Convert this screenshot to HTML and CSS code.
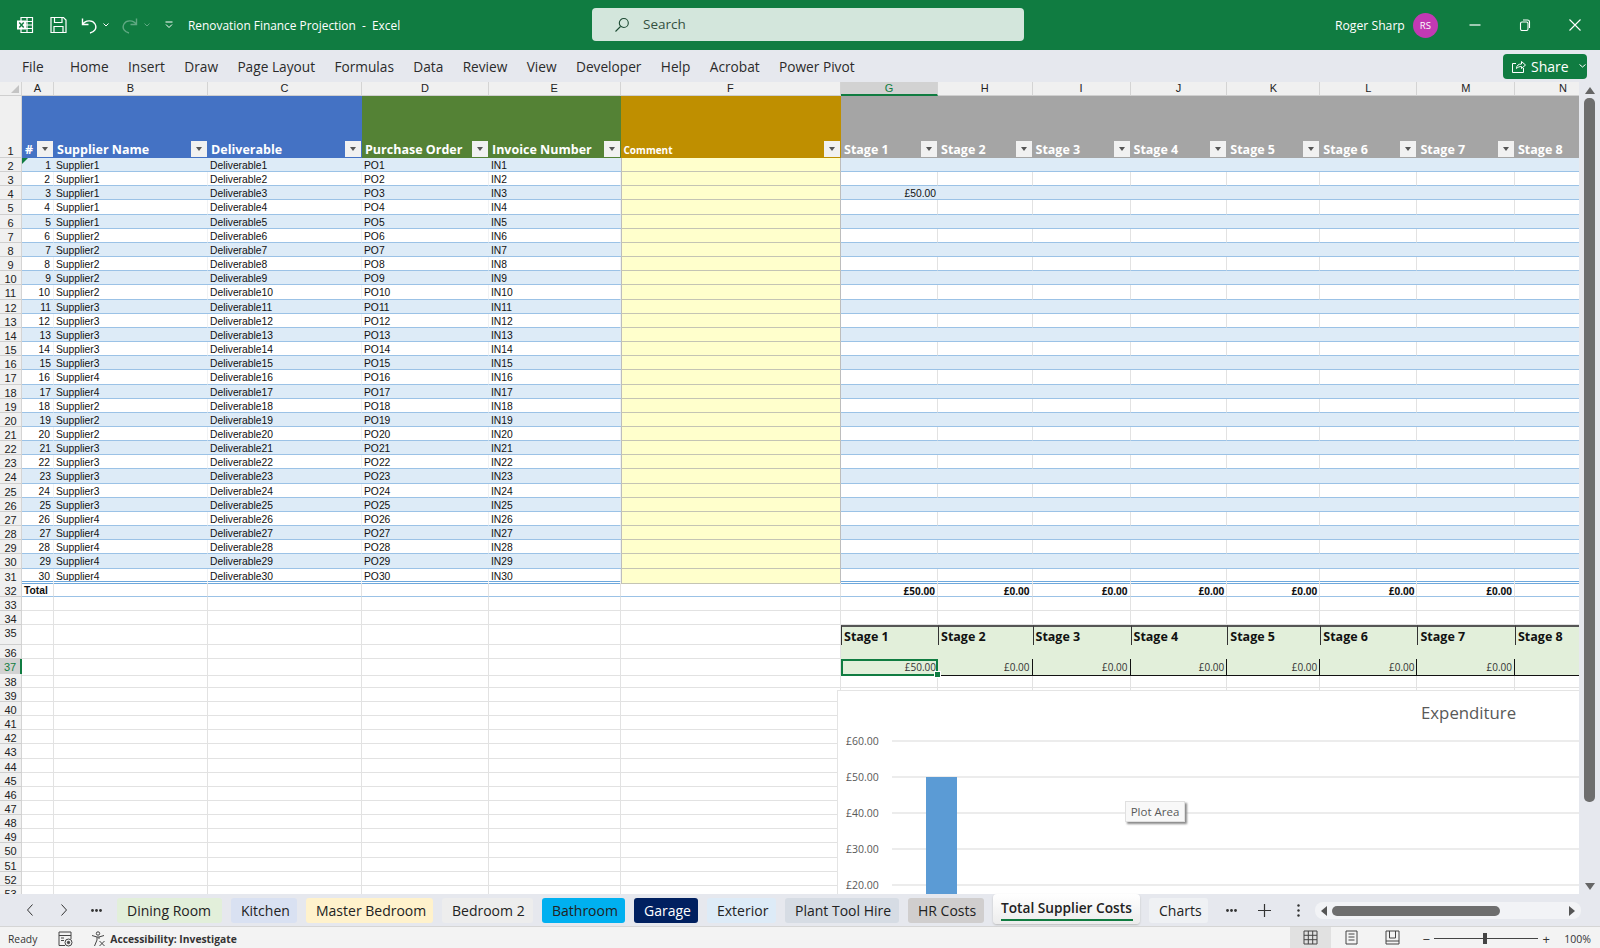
FILE: index.html
```html
<!DOCTYPE html>
<html lang="en">
<head>
  <meta charset="UTF-8" />
  <title>Renovation Finance Projection - Excel</title>
  <link rel="stylesheet" href="styles.css">
</head>
<body>
  <header class="titlebar">
    <div class="qat">
      <svg class="logo" width="18" height="18" viewBox="0 0 18 18" fill="none" stroke="#fff" stroke-width="1.2"><path d="M5 1.5h11.5v15H5zM5 5.5h11.5M5 9h11.5M5 12.5h11.5M11 1.5v15"/><rect x="1" y="4.5" width="9" height="9" fill="#fff" stroke="none"/><path d="M3.3 6.5l4.4 5M7.7 6.5l-4.4 5" stroke="#107c41" stroke-width="1.4"/></svg>
      <svg class="save" width="17" height="18" viewBox="0 0 17 18" fill="none" stroke="#fff" stroke-width="1.2"><path d="M1 1.5h12.5l2.5 2.5v12.5H1zM4.5 1.5v5h7.5v-5M4 16.5v-6h9v6"/></svg>
      <svg class="undo" width="16" height="17" viewBox="0 0 16 17" fill="none" stroke="#fff" stroke-width="1.4"><path d="M1.5 1.5v6h6M1.5 7.5c3-4.5 10-5 12.500-.5s-1 8-5 9"/></svg>
      <svg class="chev" width="6" height="4" viewBox="0 0 6 4" fill="none" stroke="#fff"><path d="M.5.5L3 3 5.500.5"/></svg>
      <svg class="redo" width="16" height="17" viewBox="0 0 16 17" fill="none" stroke="#5fa882" stroke-width="1.4"><path d="M14.500 1.500v6h-6M14.500 7.500c-3-4.500-10-5-12.500-.5s1 8 5 9"/></svg>
      <svg class="chev dim" width="6" height="4" viewBox="0 0 6 4" fill="none" stroke="#5fa882"><path d="M.5.5L3 3 5.500.5"/></svg>
      <svg class="custom" width="8" height="8" viewBox="0 0 8 8" fill="none" stroke="#fff"><path d="M.5 1h7M1 3.500l3 3 3-3"/></svg>
      <span class="doc-title">Renovation Finance Projection&nbsp; - &nbsp;Excel</span>
    </div>
    <div class="search">
      <svg width="16" height="16" viewBox="0 0 16 16" fill="none" stroke="#1c4a33" stroke-width="1.1"><circle cx="9.800" cy="6" r="4.500"/><path d="M6.500 9.500L1.500 14.500"/></svg>
      <span>Search</span>
    </div>
    <div class="account">
      <span class="user">Roger Sharp</span>
      <span class="avatar">RS</span>
      <div class="winbtns">
        <svg width="12" height="12" viewBox="0 0 12 12" stroke="#fff" stroke-width="1.200"><path d="M.5 6h11"/></svg>
        <svg width="12" height="12" viewBox="0 0 12 12" fill="none" stroke="#fff" stroke-width="1.100"><rect x="1.500" y="3" width="7.500" height="8.500" rx="1.500"/><path d="M4 1h4.500A2 2 0 0 1 10.500 3v6"/></svg>
        <svg width="12" height="12" viewBox="0 0 12 12" stroke="#fff" stroke-width="1.100"><path d="M.5.500l11 11M11.500.500l-11 11"/></svg>
      </div>
    </div>
  </header>

  <nav class="ribbon">
    <span class="rtab file">File</span>
    <span class="rtab">Home</span>
    <span class="rtab">Insert</span>
    <span class="rtab">Draw</span>
    <span class="rtab">Page Layout</span>
    <span class="rtab">Formulas</span>
    <span class="rtab">Data</span>
    <span class="rtab">Review</span>
    <span class="rtab">View</span>
    <span class="rtab">Developer</span>
    <span class="rtab">Help</span>
    <span class="rtab">Acrobat</span>
    <span class="rtab">Power Pivot</span>
    <button class="share">
      <svg width="16" height="15" viewBox="0 0 16 15" fill="none" stroke="#fff"><path d="M5 4.500H1.500v9h11V9M5.500 9.500c0-3 2-4.500 5-4.500V2.500l4 3.500-4 3.500V7.500c-2 0-3.500.5-5 2z"/></svg>
      <span>Share</span>
      <svg class="share-chev" width="7" height="4" viewBox="0 0 7 4" fill="none" stroke="#fff"><path d="M.5.500l3 2.500 3-2.500"/></svg>
    </button>
  </nav>

  <main class="workspace">
    <div class="sheet" id="sheet">
      <div class="chart">
        <svg width="741" height="204" viewBox="0 0 741 204">
          <text class="chart-title" x="583" y="28">Expenditure</text>
          <g class="gridlines">
            <line x1="54" y1="50" x2="741" y2="50"/>
            <line x1="54" y1="86" x2="741" y2="86"/>
            <line x1="54" y1="122" x2="741" y2="122"/>
            <line x1="54" y1="158" x2="741" y2="158"/>
            <line x1="54" y1="194" x2="741" y2="194"/>
          </g>
          <g class="axis">
            <text x="8" y="54">£60.00</text>
            <text x="8" y="90">£50.00</text>
            <text x="8" y="126">£40.00</text>
            <text x="8" y="162">£30.00</text>
            <text x="8" y="198">£20.00</text>
          </g>
          <rect x="88" y="86" width="31" height="118" fill="#5b9bd5"/>
        </svg>
        <div class="tip">Plot Area</div>
      </div>
    </div>
    <aside class="vscroll">
      <svg width="10" height="7" viewBox="0 0 10 7" fill="#666"><path d="M5 0l5 7H0z"/></svg>
      <div class="vtrack"><div class="vthumb"></div></div>
      <svg width="10" height="7" viewBox="0 0 10 7" fill="#666"><path d="M5 7L0 0h10z"/></svg>
    </aside>
  </main>

  <section class="tabbar">
    <div class="tabnav">
      <svg width="8" height="12" viewBox="0 0 8 12" fill="none" stroke="#333"><path d="M6.500.500L1.500 6l5 5.500"/></svg>
      <svg width="8" height="12" viewBox="0 0 8 12" fill="none" stroke="#333"><path d="M1.500.500l5 5.500-5 5.500"/></svg>
      <svg class="dots" width="11" height="3" viewBox="0 0 11 3" fill="#333"><circle cx="1.500" cy="1.500" r="1.400"/><circle cx="5.500" cy="1.500" r="1.400"/><circle cx="9.500" cy="1.500" r="1.400"/></svg>
    </div>
    <div class="tabs">
      <span class="tab t-dining">Dining Room</span>
      <span class="tab t-kitchen">Kitchen</span>
      <span class="tab t-master">Master Bedroom</span>
      <span class="tab t-bed2">Bedroom 2</span>
      <span class="tab t-bath">Bathroom</span>
      <span class="tab t-garage">Garage</span>
      <span class="tab t-ext">Exterior</span>
      <span class="tab t-plant">Plant Tool Hire</span>
      <span class="tab t-hr">HR Costs</span>
      <span class="tab t-total">Total Supplier Costs</span>
      <span class="tab t-charts">Charts</span>
    </div>
    <svg class="more" width="11" height="3" viewBox="0 0 11 3" fill="#333"><circle cx="1.500" cy="1.500" r="1.400"/><circle cx="5.500" cy="1.500" r="1.400"/><circle cx="9.500" cy="1.500" r="1.400"/></svg>
    <svg class="plus" width="13" height="13" viewBox="0 0 13 13" stroke="#333" stroke-width="1.200"><path d="M6.500 0v13M0 6.500h13"/></svg>
    <svg class="kebab" width="3" height="13" viewBox="0 0 3 13" fill="#333"><circle cx="1.500" cy="1.500" r="1.200"/><circle cx="1.500" cy="6.500" r="1.200"/><circle cx="1.500" cy="11.500" r="1.200"/></svg>
    <div class="hscroll">
      <svg width="6" height="10" viewBox="0 0 6 10" fill="#555"><path d="M0 5l6-5v10z"/></svg>
      <div class="hthumb"></div>
      <svg class="hright" width="6" height="10" viewBox="0 0 6 10" fill="#555"><path d="M6 5L0 0v10z"/></svg>
    </div>
  </section>

  <footer class="statusbar">
    <span class="ready">Ready</span>
    <svg class="macro" width="15" height="16" viewBox="0 0 15 16" fill="none" stroke="#444"><path d="M7 14.500H1V1h12v7M1 4.500h12M3 7h3M3 9.500h3"/><circle cx="10.500" cy="11.500" r="3.500"/><circle cx="10.500" cy="11.500" r="1.200" fill="#444"/></svg>
    <svg class="access" width="16" height="16" viewBox="0 0 16 16" fill="none" stroke="#444"><circle cx="7" cy="2.500" r="1.700"/><path d="M1 4.500l5 1.500h2l5-1.500M6 6v3l-2.500 6M8 6v2M8.500 10l5 5M13.500 10l-5 5"/></svg>
    <span class="a11y">Accessibility: Investigate</span>
    <div class="views">
      <span class="view on"><svg width="15" height="15" viewBox="0 0 15 15" fill="none" stroke="#444"><path d="M1 1h13v13H1zM1 5.300h13M1 9.700h13M5.300 1v13M9.700 1v13"/></svg></span>
      <span class="view"><svg width="13" height="15" viewBox="0 0 13 15" fill="none" stroke="#444"><path d="M1 1h11v13H1zM3.500 4h6M3.500 7h6M3.500 10h6"/></svg></span>
      <span class="view"><svg width="15" height="15" viewBox="0 0 15 15" fill="none" stroke="#444"><path d="M1 1h13v13H1zM4.500 1v7h6V1M1 11h13"/></svg></span>
    </div>
    <div class="zoom">
      <span class="zsign">−</span>
      <div class="zline"><div class="zthumb"></div></div>
      <span class="zsign">+</span>
      <span class="zpct">100%</span>
    </div>
  </footer>

  <script src="script.js"></script>
</body>
</html>
```

FILE: styles.css
```css
:root {
  --green: #107c41;
  --chrome: #e6e8ee;
  --ui: "Open Sans", "Noto Sans", sans-serif;
  --cell: "Liberation Sans", Arial, sans-serif;
  --cols: 22px 32px 154px 154px 127px 131.500px 220.500px 97px 94.500px 98px 96.800px 93px 97.200px 97.500px 97px;
}

* {
  box-sizing: border-box;
}

body {
  margin: 0;
  height: 948px;
  overflow: hidden;
  display: flex;
  flex-direction: column;
  background: var(--chrome);
  font-family: var(--ui);
  color: #222;
}

/* title bar */
.titlebar {
  height: 50px;
  flex: none;
  background: var(--green);
  color: #fff;
  display: grid;
  grid-template-columns: 592px 432px 1fr;
  align-items: center;
}

.qat {
  display: flex;
  align-items: center;
  padding-left: 16px;
}

.save { margin-left: 16px; }
.undo { margin-left: 14px; }
.chev { margin-left: 6px; }
.redo { margin-left: 13px; }
.custom { margin-left: 15px; }

.doc-title {
  margin-left: 15px;
  font-size: 11.900px;
  white-space: nowrap;
}

.search {
  height: 33px;
  margin-top: -1px;
  background: #d3e6dc;
  border-radius: 4px;
  display: flex;
  align-items: center;
  gap: 13px;
  padding-left: 22px;
  font-size: 13.500px;
  line-height: 17px;
  color: #33503f;
}

.account {
  display: flex;
  align-items: center;
  padding-left: 311px;
  white-space: nowrap;
}

.user {
  font-size: 12.200px;
}

.avatar {
  width: 25px;
  height: 25px;
  margin-left: 8px;
  border-radius: 50%;
  background: #c239b3;
  font-size: 9.500px;
  display: flex;
  align-items: center;
  justify-content: center;
}

.winbtns {
  display: flex;
  gap: 38px;
  margin-left: 31px;
}

/* ribbon tabs */
.ribbon {
  height: 32px;
  flex: none;
  display: flex;
  align-items: center;
  gap: 19.350px;
  padding-left: 22px;
  position: relative;
  font-size: 13.700px;
  color: #2b2b2b;
}

.rtab.file { margin-right: 7px; }

.share {
  margin-left: auto;
  margin-right: 13px;
  width: 84px;
  height: 25px;
  border: none;
  border-radius: 4px;
  background: var(--green);
  color: #fff;
  font-family: var(--ui);
  font-size: 14px;
  display: flex;
  align-items: center;
  gap: 4px;
  padding: 0 0 0 8px;
}

.share-chev { margin-left: 6px; }

/* sheet */
.workspace {
  flex: none;
  height: 812px;
  display: flex;
}

.sheet {
  width: 1579px;
  position: relative;
  overflow: hidden;
  background: #fff;
  font-family: var(--cell);
  font-size: 10.300px;
  color: #111;
}

.row {
  display: grid;
  grid-template-columns: var(--cols);
  height: 14.170px;
}

.row > div {
  border-right: 1px solid #e2e2e2;
  border-bottom: 1px solid #e2e2e2;
  padding: 0 3px 0 2px;
  line-height: 16px;
  white-space: nowrap;
  overflow: hidden;
}

.row > .rh,
.colheads > div {
  background: #f0f0f0;
  border-right: 1px solid #d4d4d4;
  border-bottom: 1px solid #cfcfcf;
  padding: 0;
  text-align: center;
  font-size: 11px;
  color: #222;
}

.colheads > div {
  line-height: 13px;
}

.row > .rh.sel {
  background: #d2d2d2;
  color: #107c41;
  border-right: 2px solid var(--green);
}

.colheads > div.sel {
  background: #d2d2d2;
  color: #107c41;
  border-bottom: 2px solid var(--green);
}

.corner {
  position: relative;
}

.corner::after {
  content: "";
  position: absolute;
  right: 2px;
  bottom: 2px;
  border-style: solid;
  border-width: 0 0 8px 8px;
  border-color: transparent transparent #c4c4c4 transparent;
}

.colheads {
  height: 14px;
}

.num { text-align: right; }

/* table header row */
.row.head {
  height: 62px;
}

.row.head > div:not(.rh) {
  border: none;
  padding: 0 0 1px 3px;
  display: flex;
  align-items: flex-end;
  justify-content: space-between;
  color: #fff;
  font-family: var(--ui);
  font-weight: 700;
  font-size: 12.500px;
  line-height: 15px;
}

.row.head > .rh {
  display: flex;
  align-items: flex-end;
  justify-content: center;
  line-height: 11px;
}

.row.head > .h-blue { background: #4472c4; }
.row.head > .h-green { background: #548235; }
.row.head > .h-grey { background: #a5a5a5; }

.row.head > div.h-gold:not(.rh) {
  background: #bf8f00;
  font-size: 10px;
  line-height: 14px;
}

.filter {
  width: 16px;
  height: 16px;
  flex: none;
  margin-right: 1px;
  background: #f1f1f1;
  position: relative;
}

.filter::after {
  content: "";
  position: absolute;
  left: 5px;
  top: 6px;
  border-style: solid;
  border-width: 4px 3px 0 3px;
  border-color: #555 transparent transparent transparent;
}

/* table body */
.row.band > div:not(.rh) {
  background: #ddebf7;
  border-right: none;
  border-bottom: 1px solid #9bc2e6;
}

.row.plain > div:not(.rh) {
  border-bottom: 1px solid #9bc2e6;
}

.row.plain > div.data-a,
.row.plain > div.data-b {
  border-right-color: #f0f2f4;
}

.row.band > div.yellow,
.row.plain > div.yellow {
  background: #ffffcc;
  border-left: 1px solid #bdbdbd;
  border-right: 1px solid #bdbdbd;
  border-bottom: 1px solid #c4c4b4;
}

.row.last > div:not(.rh):not(.yellow) {
  border-bottom: 3px double #6ea8dc;
  height: 15px;
}

.row.first > .cell-a {
  position: relative;
}

.row.first > .cell-a::before {
  content: "";
  position: absolute;
  left: 0;
  top: 0;
  border-style: solid;
  border-width: 6px 6px 0 0;
  border-color: var(--green) transparent transparent transparent;
}

.row.total > div:not(.rh) {
  border-bottom: 1px solid #9bc2e6;
  font-weight: 700;
}

.row.total .money,
.row.plain .money,
.row.band .money,
.row.stage-values .money {
  font-family: var(--ui);
  text-align: right;
  padding: 0 2px 0 0;
  font-size: 10px;
}

.row.plain .money.arial,
.row.band .money.arial {
  font-family: var(--cell);
  font-size: 10.300px;
}

/* stage summary block */
.row.stage-head { height: 20.300px; }
.row.stage-mid { height: 14px; }

.row.stage-head > .st,
.row.stage-mid > .st,
.row.stage-values > .st {
  background: #e2efda;
  border-right: none;
  border-bottom: none;
}

.row.stage-head > .st {
  border-top: 2px solid #555;
  border-left: 1px solid #333;
  font-family: var(--ui);
  font-weight: 700;
  font-size: 12.500px;
  line-height: 20px;
  padding-left: 2px;
  color: #111;
}

.row.stage-values > .st {
  border-right: 1px solid #111;
  border-bottom: 1px solid #111;
  color: #333;
  position: relative;
  overflow: visible;
}

.row.stage-values > .st.no-edge {
  border-right: none;
}

.row.stage-values > .st.active {
  outline: 2px solid var(--green);
  outline-offset: -2px;
  padding-right: 2px;
  border-right: none;
}

.st.active::after {
  content: "";
  position: absolute;
  right: -3px;
  bottom: -3px;
  width: 5px;
  height: 5px;
  background: var(--green);
  border: 1px solid #fff;
  z-index: 1;
}

/* chart */
.chart {
  position: absolute;
  left: 837px;
  top: 608px;
  right: 0;
  bottom: 0;
  background: #fff;
  border-left: 1px solid #e4e4e4;
  border-top: 1px solid #e4e4e4;
  font-family: var(--ui);
}

.chart svg {
  display: block;
}

.chart-title {
  font-size: 16.800px;
  fill: #595959;
}

.gridlines line {
  stroke: #d9d9d9;
}

.axis text {
  font-size: 10.500px;
  fill: #595959;
}

.tip {
  position: absolute;
  left: 287px;
  top: 110px;
  width: 60px;
  height: 21px;
  background: #f8f8f8;
  border: 1px solid #e0e0e0;
  box-shadow: 2px 2px 2px #8a8a8a;
  font-size: 11.500px;
  line-height: 19px;
  text-align: center;
  color: #595959;
}

/* scrollbars */
.vscroll {
  width: 21px;
  display: flex;
  flex-direction: column;
  align-items: center;
  padding: 5px 3px 4px;
  gap: 4px;
}

.vscroll svg {
  flex: none;
}

.vtrack {
  flex: 1;
  width: 100%;
  padding: 0 2px;
}

.vthumb {
  height: 704px;
  background: #6e6e6e;
  border-radius: 5px;
}

/* sheet tabs */
.tabbar {
  height: 33px;
  flex: none;
  display: flex;
  align-items: center;
  border-bottom: 1px solid #d5d5d5;
  position: relative;
}

.tabnav {
  width: 117px;
  flex: none;
  display: flex;
  align-items: center;
  padding-left: 26px;
  gap: 26px;
}

.tabnav .dots {
  margin-left: -3px;
}

.tabs {
  display: flex;
  align-items: center;
  gap: 9px;
}

.tab {
  height: 25px;
  padding: 0 10px;
  border-radius: 3px;
  font-size: 14px;
  line-height: 25px;
  white-space: nowrap;
  display: block;
}

.t-dining { background: #e2efda; width: 105px; }
.t-kitchen { background: #d9e1f2; width: 66px; }
.t-master { background: #fff2cc; width: 127px; }
.t-bed2 { background: #ededed; width: 91px; }
.t-bath { background: #00b0f0; width: 83px; }
.t-garage { background: #002060; color: #fff; width: 64px; }
.t-ext { background: #ddebf7; width: 69px; }
.t-plant { background: #d6dce4; width: 114px; }
.t-hr { background: #d0cece; width: 76px; }

.t-total {
  width: 147px;
  height: 30px;
  margin-top: -3px;
  padding: 0 8px;
  background: linear-gradient(#ffffff, #ececec);
  border-radius: 4px;
  box-shadow: 0 1px 2px #bbb;
  font-weight: 600;
  font-size: 13.700px;
  line-height: 27px;
  position: relative;
}

.t-total::after {
  content: "";
  position: absolute;
  left: 8px;
  right: 7px;
  bottom: 3px;
  height: 2px;
  background: var(--green);
}

.t-charts { background: #eff1f4; width: 59px; }

.more {
  margin-left: 18px;
  flex: none;
}

.plus { margin-left: 21px; flex: none; }
.kebab { margin-left: 26px; flex: none; }

.hscroll {
  position: absolute;
  left: 1315px;
  top: 8px;
  width: 266px;
  height: 17px;
  background: #f2f3f6;
  border-radius: 8px;
  display: flex;
  align-items: center;
  padding: 0 6px;
}

.hthumb {
  width: 168px;
  height: 10px;
  margin-left: 5px;
  background: #6e6e6e;
  border-radius: 5px;
}

.hright { margin-left: auto; }

/* status bar */
.statusbar {
  flex: 1;
  background: #f3f3f3;
  display: flex;
  align-items: center;
  padding: 2px 0 0 8px;
  font-size: 10.300px;
  color: #333;
}

.macro { margin-left: 21px; }
.access { margin-left: 18px; }

.a11y {
  margin-left: 3px;
  font-weight: 700;
}

.views {
  margin-left: auto;
  margin-top: -2px;
  display: flex;
  align-self: stretch;
}

.view {
  width: 41px;
  display: flex;
  align-items: center;
  justify-content: center;
}

.view.on { background: #e1e1e1; }

.zoom {
  display: flex;
  align-items: center;
  margin-left: 8px;
  padding-right: 9px;
}

.zsign {
  font-size: 13px;
  width: 10px;
  text-align: center;
}

.zline {
  width: 104px;
  height: 1px;
  background: #444;
  position: relative;
  margin: 0 3px;
}

.zthumb {
  position: absolute;
  left: 49px;
  top: -5px;
  width: 4px;
  height: 11px;
  background: #444;
}

.zpct {
  margin-left: 13px;
  font-size: 10.500px;
}
```

FILE: script.js
```js
const sheet = document.getElementById('sheet');
const chart = sheet.querySelector('.chart');

const columns = ['A', 'B', 'C', 'D', 'E', 'F', 'G', 'H', 'I', 'J', 'K', 'L', 'M', 'N'];
const stages = columns.slice(6);

// which supplier each of the 30 lines belongs to
const supplierOf = [1, 1, 1, 1, 1, 2, 2, 2, 2, 2, 3, 3, 3, 3, 3, 4, 4, 2, 2, 2, 3, 3, 3, 3, 3, 4, 4, 4, 4, 4];

function addRow(className, cells) {
  const row = document.createElement('div');
  row.className = 'row ' + className;
  row.innerHTML = cells;
  sheet.insertBefore(row, chart);
}

function rh(n, extra) {
  return `<div class="rh ${extra || ''}">${n}</div>`;
}

function emptyCols(from, to, cls) {
  let html = '';
  for (let i = from; i < to; i++) html += `<div class="${cls || ''}"></div>`;
  return html;
}

function filterCell(text, cls) {
  return `<div class="${cls}"><span>${text}</span><i class="filter"></i></div>`;
}

// column letters
addRow('colheads', '<div class="corner"></div>' + columns.map(c =>
  `<div class="${c === 'G' ? 'sel' : ''}">${c}</div>`).join(''));

// table header
addRow('head', rh(1) +
  filterCell('#', 'h-blue') +
  filterCell('Supplier Name', 'h-blue') +
  filterCell('Deliverable', 'h-blue') +
  filterCell('Purchase Order', 'h-green') +
  filterCell('Invoice Number', 'h-green') +
  filterCell('Comment', 'h-gold') +
  stages.map((s, i) => filterCell('Stage ' + (i + 1), 'h-grey')).join(''));

// 30 data lines
supplierOf.forEach((sup, i) => {
  const n = i + 1;
  const rowNo = n + 1;
  let cls = n % 2 ? 'band' : 'plain';
  if (n === 1) cls += ' first';
  if (n === 30) cls += ' last';
  let stageCells = '';
  stages.forEach((s, j) => {
    stageCells += (n === 3 && j === 0)
      ? '<div class="money arial">£50.00</div>'
      : '<div></div>';
  });
  addRow(cls, rh(rowNo) +
    `<div class="num cell-a data-a">${n}</div>` +
    `<div class="data-a">Supplier${sup}</div>` +
    `<div class="data-a">Deliverable${n}</div>` +
    `<div class="data-a">PO${n}</div>` +
    `<div class="data-b">IN${n}</div>` +
    '<div class="yellow"></div>' + stageCells);
});

// totals
let totals = '';
stages.forEach((s, j) => {
  if (j === 7) totals += '<div></div>';
  else totals += `<div class="money">£${j === 0 ? '50' : '0'}.00</div>`;
});
addRow('total', rh(32) + '<div>Total</div>' + emptyCols(1, 6) + totals);

addRow('', rh(33) + emptyCols(0, 14));
addRow('', rh(34) + emptyCols(0, 14));

// stage summary
addRow('stage-head', rh(35) + emptyCols(0, 6) +
  stages.map((s, i) => `<div class="st">Stage ${i + 1}</div>`).join(''));
addRow('stage-mid', rh(36) + emptyCols(0, 6) + emptyCols(0, 8, 'st'));

let values = '';
stages.forEach((s, j) => {
  if (j === 7) values += '<div class="st no-edge"></div>';
  else values += `<div class="st money ${j === 0 ? 'active' : ''}">£${j === 0 ? '50' : '0'}.00</div>`;
});
addRow('stage-values', rh(37, 'sel') + emptyCols(0, 6) + values);

// empty rows under the chart
for (let n = 38; n <= 53; n++) {
  addRow('', rh(n) + emptyCols(0, 14));
}
```
